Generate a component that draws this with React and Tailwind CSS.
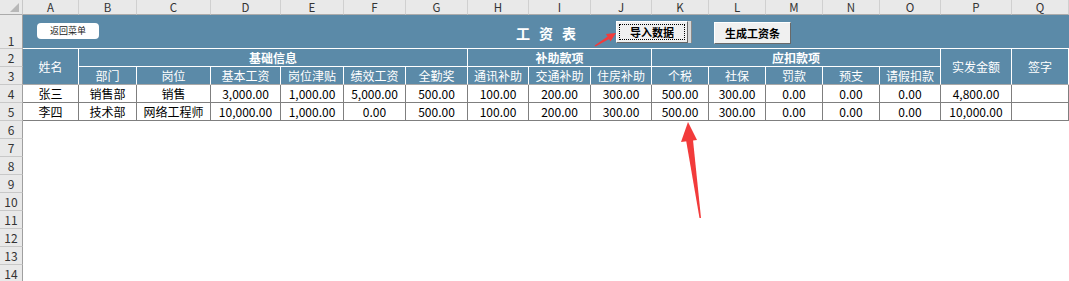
import React from "react";

const COLS = ["A","B","C","D","E","F","G","H","I","J","K","L","M","N","O","P","Q"];
const SUB = ["部门","岗位","基本工资","岗位津贴","绩效工资","全勤奖","通讯补助","交通补助","住房补助","个税","社保","罚款","预支","请假扣款"];
const DATA = [
  ["张三","销售部","销售","3,000.00","1,000.00","5,000.00","500.00","100.00","200.00","300.00","500.00","300.00","0.00","0.00","0.00","4,800.00",""],
  ["李四","技术部","网络工程师","10,000.00","1,000.00","0.00","500.00","100.00","200.00","300.00","500.00","300.00","0.00","0.00","0.00","10,000.00",""],
];

const font = { fontFamily: '"Noto Sans CJK SC", "Noto Sans", sans-serif' };

function RowHead({ n, end }) {
  return (
    <div className={`bg-[#e9e9e9] border-r border-r-[#9f9f9f] border-b border-b-[#c8c8c8] flex justify-center text-[12px] leading-[15px] text-[#333] ${end ? "items-end" : "items-center"}`}>
      {n}
    </div>
  );
}

export default function App() {
  return (
    <div className="relative w-[1069px] h-[281px] overflow-hidden bg-white" style={font}>
      <div className="grid grid-cols-[23px_56px_58px_74px_70px_63px_62px_62px_61px_62px_61px_57px_57px_57px_57px_61px_71px_57px] grid-rows-[15px_34px_18px_18px_18px_18px_18px_18px_18px_18px_18px_18px_18px_18px_18px]">
        {/* corner */}
        <div className="relative bg-[#e9e9e9] border-r border-r-[#c8c8c8] border-b border-b-[#ababab]">
          <div className="absolute right-[3px] bottom-[2px] w-0 h-0 border-l-[9px] border-l-transparent border-b-[9px] border-b-[#b8b8b8]" />
        </div>
        {COLS.map((c) => (
          <div key={c} className="bg-[#e9e9e9] border-r border-r-[#d0d0d0] border-b border-b-[#ababab] flex items-center justify-center text-[11.5px] leading-[14px] text-[#333]">
            {c}
          </div>
        ))}

        {/* row 1 */}
        <RowHead n="1" end />
        <div className="relative col-span-17 bg-[#5b8aa8] border-b border-b-white flex items-center justify-center">
          <div className="flex gap-[9px] text-white font-bold text-[14px] leading-[18px] pt-[2px]">
            <span>工</span><span>资</span><span>表</span>
          </div>
          <div className="absolute left-[14px] top-[8px] w-[62px] h-[16px] bg-white rounded-[4px] flex items-center justify-center text-[9px] leading-[12px] text-[#222]">
            返回菜单
          </div>
          <div className="absolute left-[593px] top-[6px] flex">
            <div className="w-[72px] h-[22px] bg-[#f0f0f0] border-t border-l border-t-white border-l-white border-b border-r border-b-[#696969] border-r-[#696969] p-[2px]">
              <div className="w-full h-full border border-dotted border-black flex items-center justify-center text-[11px] font-bold leading-[14px] text-black">
                导入数据
              </div>
            </div>
            <div className="w-[4px] h-[22px] bg-[#d8d8d8] border-r border-r-[#8a8a8a]" />
          </div>
          <div className="absolute left-[691px] top-[7px] w-[77px] h-[22px] bg-[#f0f0f0] border-t border-l border-t-white border-l-white border-b border-r border-b-[#696969] border-r-[#696969] flex items-center justify-center text-[11px] font-bold leading-[14px] text-black">
            生成工资条
          </div>
        </div>

        {/* row 2 */}
        <RowHead n="2" />
        <div className="row-span-2 bg-[#5b8aa8] border-r border-r-white border-b border-b-[#a9a9a9] flex items-center justify-center text-white text-[12px]">姓名</div>
        <div className="col-span-6 bg-[#5b8aa8] border-r border-r-white border-b border-b-white flex items-center justify-center text-white text-[12px] leading-[16px] font-bold">基础信息</div>
        <div className="col-span-3 bg-[#5b8aa8] border-r border-r-white border-b border-b-white flex items-center justify-center text-white text-[12px] leading-[16px] font-bold">补助款项</div>
        <div className="col-span-5 bg-[#5b8aa8] border-r border-r-white border-b border-b-white flex items-center justify-center text-white text-[12px] leading-[16px] font-bold">应扣款项</div>
        <div className="row-span-2 bg-[#5b8aa8] border-r border-r-white border-b border-b-[#a9a9a9] flex items-center justify-center text-white text-[12px]">实发金额</div>
        <div className="row-span-2 bg-[#5b8aa8] border-r border-r-white border-b border-b-[#a9a9a9] flex items-center justify-center text-white text-[12px]">签字</div>

        {/* row 3 */}
        <RowHead n="3" />
        {SUB.map((s) => (
          <div key={s} className="bg-[#5b8aa8] border-r border-r-white border-b border-b-[#a9a9a9] flex items-center justify-center text-white text-[12px] leading-[16px]">{s}</div>
        ))}

        {/* data rows */}
        {DATA.map((row, ri) => (
          <React.Fragment key={ri}>
            <RowHead n={String(ri + 4)} />
            {row.map((v, ci) => (
              <div key={ci} className="bg-white border-r border-r-[#7f7f7f] border-b border-b-[#7f7f7f] flex items-center justify-center text-[12px] leading-[16px] text-black">{v}</div>
            ))}
          </React.Fragment>
        ))}

        {/* empty rows */}
        {[6,7,8,9,10,11,12,13,14,15].map((n) => (
          <React.Fragment key={n}>
            <RowHead n={String(n)} />
            <div className="col-span-17 bg-white" />
          </React.Fragment>
        ))}
      </div>

      {/* red arrows overlay */}
      <svg className="absolute left-0 top-0 pointer-events-none" width="1069" height="281" viewBox="0 0 1069 281">
        <polygon points="616,33 610.5,41.5 606,34" fill="#f23b3b" />
        <polygon points="609.2,39 607.6,36.5 594.6,45.4 595.4,46.6" fill="#f23b3b" />
        <polygon points="688,122 681,142 697,140" fill="#f23b3b" />
        <polygon points="686,140 693,140 701,218 699.5,218" fill="#f23b3b" />
      </svg>
    </div>
  );
}
